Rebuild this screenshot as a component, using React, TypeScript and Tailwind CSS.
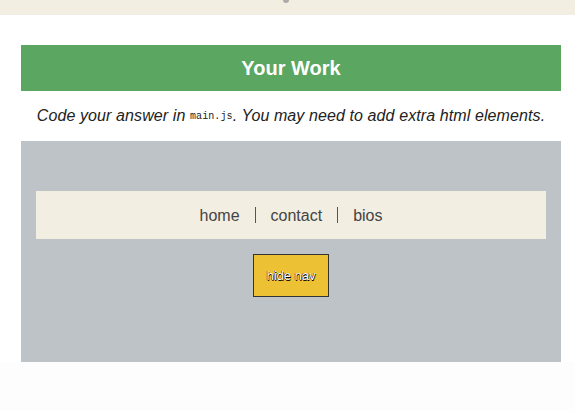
import React from "react";

// =======================
// NAV
// =======================
function NavBar() {
  const links = ["home", "contact", "bios"];
  return (
    <nav className="mx-[15px] h-[48px] bg-[#f2efe2] flex items-center justify-center">
      {links.map((link, i) => (
        <React.Fragment key={link}>
          {i > 0 && <span className="mx-[15px] w-px h-[16px] bg-[#555]" />}
          <a className="text-[16px] text-[#444] leading-none pt-[2px]">{link}</a>
        </React.Fragment>
      ))}
    </nav>
  );
}

// =======================
// MAIN COMPONENT
// =======================
export default function App() {
  return (
    <div
      className="min-h-[411px] bg-[#fdfdfd]"
      style={{ fontFamily: '"Liberation Sans", Arial, Helvetica, sans-serif' }}
    >
      <div className="relative h-[15px] bg-[#f2efe2] overflow-hidden">
        <span className="absolute left-[283px] -top-[3px] w-[6px] h-[6px] rounded-full bg-[#aaa]" />
      </div>

      <div className="bg-white pt-[30px]">
        <div className="mx-[21px] w-[540px]">
          <h1 className="h-[46px] bg-[#5ba660] flex items-center justify-center text-white font-bold text-[20px]">
            Your Work
          </h1>

          <p className="h-[50px] flex items-center justify-center italic text-[16px] tracking-[0.1px] text-[#222] whitespace-nowrap">
            Code your answer in&nbsp;
            <code className="not-italic text-[10px]" style={{ fontFamily: '"Liberation Mono", monospace' }}>
              main.js
            </code>
            . You may need to add extra html elements.
          </p>

          <section className="h-[221px] bg-[#bec3c7] pt-[50px]">
            <NavBar />
            <div className="flex justify-center mt-[15px]">
              <button
                className="w-[76px] h-[43px] bg-[#ecc133] border border-[#333] text-white text-[13px]"
                style={{ textShadow: "0.5px 0.5px 0.5px #000, -0.5px -0.5px 0.5px #000" }}
              >
                hide nav
              </button>
            </div>
          </section>
        </div>
      </div>
    </div>
  );
}
